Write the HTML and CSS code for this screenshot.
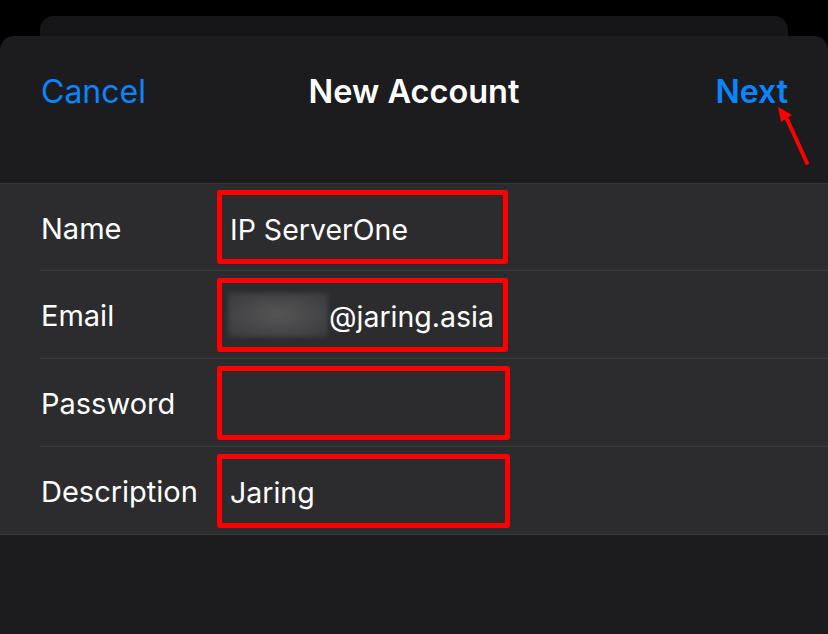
FILE: index.html
```html
<!DOCTYPE html>
<html lang="en">
<head>
    <meta charset="UTF-8">
    <meta name="viewport" content="width=device-width, initial-scale=1.0">
    <title>New Account</title>
    <link rel="stylesheet" href="styles.css">
</head>
<body>

    <div class="screen">
        <!-- Card peeking behind the sheet -->
        <div class="back-card"></div>

        <div class="sheet">
            <!-- Navigation bar -->
            <div class="nav">
                <span class="nav-btn cancel">Cancel</span>
                <span class="nav-title">New Account</span>
                <span class="nav-btn next">Next</span>
            </div>

            <!-- Annotation arrow pointing at Next -->
            <svg class="arrow" width="40" height="70" viewBox="0 0 40 70">
                <line x1="35" y1="58" x2="15" y2="14" stroke="#ff0000" stroke-width="4" stroke-linecap="round"/>
                <polygon points="6,2 20,10 9,17" fill="#ff0000"/>
            </svg>

            <!-- Account form -->
            <div class="form">
                <div class="row first">
                    <span class="label">Name</span>
                    <div class="field">IP ServerOne</div>
                </div>
                <div class="row">
                    <span class="label">Email</span>
                    <div class="field"><span class="blur"></span>@jaring.asia</div>
                </div>
                <div class="row">
                    <span class="label">Password</span>
                    <div class="field wide"></div>
                </div>
                <div class="row">
                    <span class="label">Description</span>
                    <div class="field wide">Jaring</div>
                </div>
            </div>
        </div>
    </div>

</body>
</html>
```

FILE: styles.css
```css
/* General Styles */
body {
    font-family: 'Inter', 'Noto Sans', sans-serif;
    background-color: #000;
    color: #fff;
    margin: 0;
    padding: 0;
}

.screen {
    width: 828px;
    height: 634px;
    padding-top: 16px;
    box-sizing: border-box;
    overflow: hidden;
}

.back-card {
    height: 20px;
    margin: 0 40px;
    background-color: #161618;
    border-radius: 14px 14px 0 0;
}

.sheet {
    position: relative;
    height: 598px;
    background-color: #1c1c1e;
    border-radius: 14px 14px 0 0;
}

/* Navigation bar */
.nav {
    display: grid;
    grid-template-columns: 1fr auto 1fr;
    align-items: center;
    align-content: start;
    height: 148px;
    padding: 36px 41px 0;
    box-sizing: border-box;
    border-bottom: 1px solid #38383a;
    line-height: 40px;
    font-size: 32px;
}

.nav-btn {
    color: #0a84ff;
}

.nav-title {
    font-weight: 600;
    font-size: 32.5px;
}

.next {
    justify-self: end;
    font-weight: 600;
    margin-right: -1px;
}

.arrow {
    position: absolute;
    left: 772px;
    top: 69px;
}

/* Form rows */
.form {
    background-color: #2c2c2e;
    padding-left: 40px;
    border-bottom: 1px solid #3a3a3c;
}

.row {
    display: flex;
    align-items: center;
    height: 87px;
    border-bottom: 1px solid #3d3d40;
}

.row.first {
    height: 86px;
}

.row:last-child {
    border-bottom: none;
}

.label {
    width: 177px;
    flex-shrink: 0;
    padding-left: 1px;
    box-sizing: border-box;
    font-size: 29px;
    padding-top: 2px;
}

.field {
    display: flex;
    align-items: center;
    width: 291px;
    height: 74px;
    box-sizing: border-box;
    border: 5px solid #ff0000;
    border-radius: 3px;
    padding-left: 8px;
    padding-top: 4px;
    font-size: 28.5px;
}

.field.wide {
    width: 293px;
}

.blur {
    width: 100px;
    height: 44px;
    margin-left: -2px;
    margin-right: 1px;
    margin-top: -4px;
    background: radial-gradient(ellipse at 50% 50%, #555 0%, #464648 55%, #3a3a3c 100%);
    filter: blur(2px);
}
```
